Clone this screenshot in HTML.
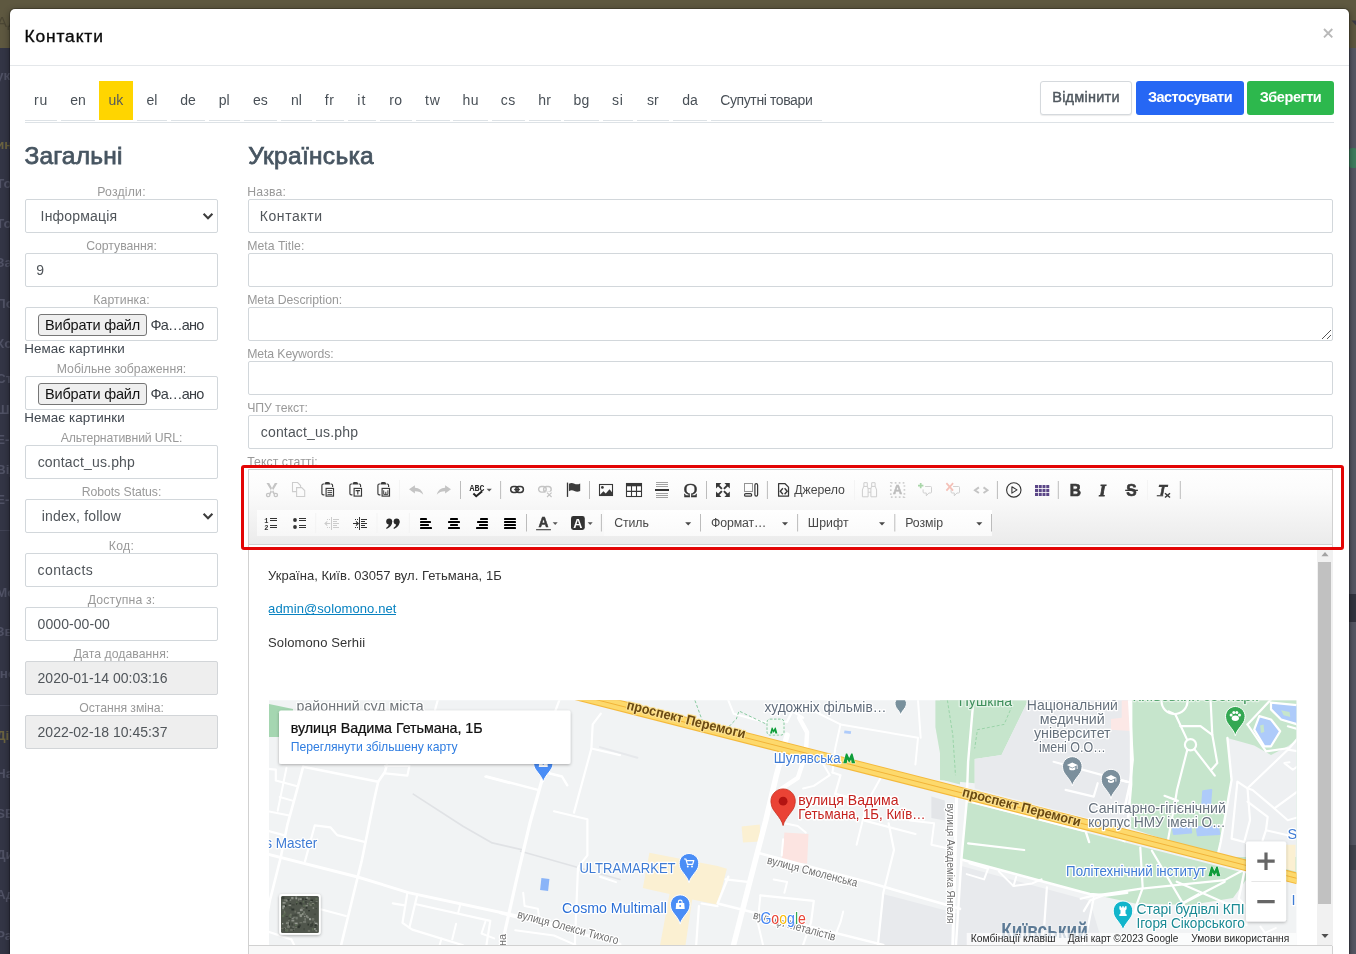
<!DOCTYPE html>
<html lang="uk"><head><meta charset="utf-8"><title>Контакти</title>
<style>
html,body{margin:0;padding:0}
body{width:1356px;height:954px;overflow:hidden;position:relative;background:#fff;font-family:"Liberation Sans",sans-serif;color:#50555a}
.wrap{position:absolute;left:0;top:0;width:1356px;height:954px;overflow:hidden;will-change:transform}
.t{position:absolute;white-space:nowrap;line-height:1;display:block}
.a{position:absolute;display:block}
.bgtop{position:absolute;left:0;top:0;width:1356px;height:48px;background:#5e5840}
.bgleft{position:absolute;left:0;top:48px;width:12px;height:906px;background:#333545}
.sf{position:absolute;left:-4px;width:16px;overflow:hidden;white-space:nowrap;font-size:13.5px;font-weight:700;line-height:16px;color:#505265}
.sfl{position:absolute;left:0;width:12px;height:1px;background:#414355}
.bgright{position:absolute;left:1346px;top:48px;width:10px;height:906px;background:linear-gradient(90deg,#454753,#565864 60%)}
.bgright2{position:absolute;left:1346px;top:594px;width:10px;height:28px;background:#32343f}
.bgright3{position:absolute;left:1346px;top:845px;width:10px;height:25px;background:#42444e}
.bggreen{position:absolute;left:1349px;top:148px;width:8px;height:20px;background:#3e7d5e;border-radius:3px}
.modal{position:absolute;left:10px;top:8.5px;width:1339px;height:960px;background:#fff;border-radius:5px;box-shadow:0 0 0 1px rgba(0,0,0,.2),0 2px 7px rgba(0,0,0,.45)}
.mhead{position:absolute;left:0;top:56.5px;width:100%;height:1px;background:#e4e7ea}
.tab{position:absolute;top:81px;height:39px;border-bottom:1px solid #dde2e6;box-sizing:content-box}
.tab.act{background:#ffd500;border-bottom:0;height:38.7px;top:81.3px}
.hr{position:absolute;height:1px;background:#dde2e6}
.btn{position:absolute;border-radius:3px;box-sizing:border-box}
.b1{background:#fff;border:1px solid #d5d9dd;box-shadow:0 1px 1px rgba(0,0,0,.08)}
.b2{background:#2667f4}
.b3{background:#2db84d}
.inp{position:absolute;height:33.5px;box-sizing:border-box;border:1px solid #d2d7db;border-radius:2px;background:#fff}
.inp.dis{background:#eeeeee;border-color:#d2d5d8}
.fbtn{position:absolute;box-sizing:border-box;border:1px solid #767676;border-radius:3px;background:#efefef}

.ckbox{position:absolute;left:248px;top:469px;width:1084.8px;height:500px;box-sizing:border-box;border:1px solid #d1d1d1;background:#fff}
.cktop{position:absolute;left:249px;top:470px;width:1082.8px;height:73.6px;background:linear-gradient(#fefefe,#fbfbfb 30%,#f3f3f3 65%,#ebebeb);border-bottom:1px solid #d1d1d1}
.ckband{position:absolute;left:256.7px;top:510.4px;width:347px;height:25.2px;background:linear-gradient(rgba(255,255,255,.75),rgba(255,255,255,.55))}
.ckband2{position:absolute;left:603.7px;top:510.4px;width:388.3px;height:25.2px;background:linear-gradient(#fff,#fafafa)}

.sbtrack{position:absolute;left:1316.5px;top:548px;width:16px;height:397.5px;background:#f1f1f1}
.sbthumb{position:absolute;left:1318.2px;top:562px;width:12.8px;height:342px;background:#c1c1c1}
.ckbottom{position:absolute;left:249px;top:945px;width:1082.8px;height:10px;background:#f8f8f8;border-top:1px solid #d1d1d1}
.redbox{position:absolute;left:241px;top:465px;width:1103px;height:84.5px;box-sizing:border-box;border:3px solid #e30505;border-radius:3px}
</style></head>
<body>
<div class="wrap">
<div class="bgtop"></div><div class="bgleft"></div><div class="bgright"></div><div class="bgright2"></div><div class="bgright3"></div><div class="bggreen"></div><svg class="a" style="left:1350px;top:19px" width="6" height="8" viewBox="0 0 6 8"><path d="M1.5 1.5 H6 V6.5 Z" fill="#3a3a44"/></svg>
<span class="sf" style="top:68px;">ук</span>
<span class="sf" style="top:137px;color:#6b6340;">ин</span>
<span class="sf" style="top:176px;">То</span>
<span class="sf" style="top:216px;">То</span>
<span class="sf" style="top:255px;">За</span>
<span class="sf" style="top:296px;">По</span>
<span class="sf" style="top:336px;">Ко</span>
<span class="sf" style="top:371px;">Ст</span>
<span class="sf" style="top:402px;">Ша</span>
<span class="sf" style="top:432px;">E-r</span>
<span class="sf" style="top:462px;">Від</span>
<span class="sf" style="top:492px;">E-r</span>
<span class="sf" style="top:585px;">Мо</span>
<span class="sf" style="top:624px;">Зв</span>
<span class="sf" style="top:666px;">Інс</span>
<span class="sf" style="top:728px;color:#6b6340;">Ді</span>
<span class="sf" style="top:766px;">На</span>
<span class="sf" style="top:806px;">SE</span>
<span class="sf" style="top:847px;">Ди</span>
<span class="sf" style="top:887px;">Ад</span>
<span class="sf" style="top:928px;">Ра</span>
<span class="sf" style="top:14px;left:-3px;color:#4b4634;font-weight:400;font-size:15px">АД</span>
<div class="sfl" style="top:530px"></div><div class="sfl" style="top:705px"></div>
<div class="modal">
<div class="mhead"></div>
</div>
<span class="t" style="left:24.47px;top:28.07px;font-size:17.4px;color:#0a0a0a;letter-spacing:0.865px;-webkit-text-stroke:0.35px #0a0a0a;">Контакти</span>
<svg class="a" style="left:1322px;top:27px" width="12" height="12" viewBox="0 0 12 12"><path d="M2 2 L10.3 10.3 M10.3 2 L2 10.3" stroke="#b9b9b9" stroke-width="1.9" fill="none"/></svg>
<div class="tab" style="left:25.0px;width:32.0px"></div>
<span class="t" style="left:25.00px;top:93.35px;font-size:14px;color:#495057;letter-spacing:0.683px;width:32.0px;text-align:center;">ru</span>
<div class="tab" style="left:61.0px;width:34.0px"></div>
<span class="t" style="left:61.00px;top:93.35px;font-size:14px;color:#495057;width:34.0px;text-align:center;">en</span>
<div class="tab act" style="left:98.5px;width:34.8px"></div>
<span class="t" style="left:98.50px;top:93.35px;font-size:14px;color:#55595c;width:34.8px;text-align:center;">uk</span>
<div class="tab" style="left:136.6px;width:30.8px"></div>
<span class="t" style="left:136.60px;top:93.35px;font-size:14px;color:#495057;width:30.8px;text-align:center;">el</span>
<div class="tab" style="left:171.0px;width:34.0px"></div>
<span class="t" style="left:171.00px;top:93.35px;font-size:14px;color:#495057;width:34.0px;text-align:center;">de</span>
<div class="tab" style="left:208.5px;width:31.5px"></div>
<span class="t" style="left:208.50px;top:93.35px;font-size:14px;color:#495057;width:31.5px;text-align:center;">pl</span>
<div class="tab" style="left:243.6px;width:33.4px"></div>
<span class="t" style="left:243.60px;top:93.35px;font-size:14px;color:#495057;width:33.4px;text-align:center;">es</span>
<div class="tab" style="left:280.7px;width:31.3px"></div>
<span class="t" style="left:280.70px;top:93.35px;font-size:14px;color:#495057;width:31.3px;text-align:center;">nl</span>
<div class="tab" style="left:315.5px;width:28.4px"></div>
<span class="t" style="left:315.50px;top:93.35px;font-size:14px;color:#495057;letter-spacing:0.629px;width:28.4px;text-align:center;">fr</span>
<div class="tab" style="left:347.6px;width:28.4px"></div>
<span class="t" style="left:347.60px;top:93.35px;font-size:14px;color:#495057;letter-spacing:1.060px;width:28.4px;text-align:center;">it</span>
<div class="tab" style="left:379.7px;width:32.3px"></div>
<span class="t" style="left:379.70px;top:93.35px;font-size:14px;color:#495057;letter-spacing:0.433px;width:32.3px;text-align:center;">ro</span>
<div class="tab" style="left:415.8px;width:34.2px"></div>
<span class="t" style="left:415.80px;top:93.35px;font-size:14px;color:#495057;letter-spacing:0.910px;width:34.2px;text-align:center;">tw</span>
<div class="tab" style="left:453.4px;width:34.6px"></div>
<span class="t" style="left:453.40px;top:93.35px;font-size:14px;color:#495057;letter-spacing:0.421px;width:34.6px;text-align:center;">hu</span>
<div class="tab" style="left:491.7px;width:33.1px"></div>
<span class="t" style="left:491.70px;top:93.35px;font-size:14px;color:#495057;letter-spacing:0.410px;width:33.1px;text-align:center;">cs</span>
<div class="tab" style="left:528.6px;width:32.0px"></div>
<span class="t" style="left:528.60px;top:93.35px;font-size:14px;color:#495057;letter-spacing:0.183px;width:32.0px;text-align:center;">hr</span>
<div class="tab" style="left:564.4px;width:34.3px"></div>
<span class="t" style="left:564.40px;top:93.35px;font-size:14px;color:#495057;letter-spacing:0.371px;width:34.3px;text-align:center;">bg</span>
<div class="tab" style="left:602.5px;width:30.8px"></div>
<span class="t" style="left:602.50px;top:93.35px;font-size:14px;color:#495057;letter-spacing:0.848px;width:30.8px;text-align:center;">si</span>
<div class="tab" style="left:636.9px;width:32.1px"></div>
<span class="t" style="left:636.90px;top:93.35px;font-size:14px;color:#495057;width:32.1px;text-align:center;">sr</span>
<div class="tab" style="left:672.7px;width:34.6px"></div>
<span class="t" style="left:672.70px;top:93.35px;font-size:14px;color:#495057;width:34.6px;text-align:center;">da</span>
<div class="tab" style="left:710.8px;width:111.0px"></div>
<span class="t" style="left:710.80px;top:93.35px;font-size:14px;color:#495057;letter-spacing:-0.389px;width:111.0px;text-align:center;">Супутні товари</span>
<div class="hr" style="left:25px;top:122px;width:1309px"></div>
<div class="btn b1" style="left:1040px;top:81px;width:92px;height:34px"></div>
<span class="t" style="left:1040.00px;top:89.73px;font-size:14.5px;color:#50585f;letter-spacing:0.231px;width:92px;text-align:center;-webkit-text-stroke:0.45px #50585f;">Відмінити</span>
<div class="btn b2" style="left:1136px;top:81px;width:108px;height:34px"></div>
<span class="t" style="left:1136.00px;top:89.73px;font-size:14.5px;font-weight:700;color:#fff;letter-spacing:-0.503px;width:108px;text-align:center;">Застосувати</span>
<div class="btn b3" style="left:1247px;top:81px;width:87px;height:34px"></div>
<span class="t" style="left:1247.00px;top:89.73px;font-size:14.5px;font-weight:700;color:#fff;letter-spacing:-0.439px;width:87px;text-align:center;">Зберегти</span>
<span class="t" style="left:24.41px;top:144.06px;font-size:24.5px;color:#475561;letter-spacing:0.213px;-webkit-text-stroke:0.75px #475561;">Загальні</span>
<span class="t" style="left:248.21px;top:144.06px;font-size:24.5px;color:#475561;letter-spacing:0.311px;-webkit-text-stroke:0.75px #475561;">Українська</span>
<span class="t" style="left:25.00px;top:186.43px;font-size:12.25px;color:#999;letter-spacing:0.196px;width:193px;text-align:center;">Розділи:</span>
<div class="inp " style="left:25px;top:199.2px;width:193px"></div>
<span class="t" style="left:40.59px;top:209.25px;font-size:14px;letter-spacing:0.188px;">Інформація</span>
<svg class="a" style="left:202px;top:212.0px" width="12" height="9" viewBox="0 0 12 9"><path d="M1.6 1.8 L6 6.2 L10.4 1.8" stroke="#3c3c3c" stroke-width="2.1" fill="none"/></svg>
<span class="t" style="left:25.00px;top:240.23px;font-size:12.25px;color:#999;letter-spacing:-0.021px;width:193px;text-align:center;">Сортування:</span>
<div class="inp " style="left:25px;top:253.2px;width:193px"></div>
<span class="t" style="left:36.29px;top:263.25px;font-size:14px;">9</span>
<span class="t" style="left:25.00px;top:294.23px;font-size:12.25px;color:#999;letter-spacing:0.114px;width:193px;text-align:center;">Картинка:</span>
<div class="inp " style="left:25px;top:307.2px;width:193px"></div>
<div class="fbtn" style="left:38px;top:313.8px;width:109px;height:22px"></div>
<span class="t" style="left:38.00px;top:318.33px;font-size:14.5px;color:#111;letter-spacing:-0.194px;width:109px;text-align:center;">Вибрати файл</span>
<span class="t" style="left:150.56px;top:318.33px;font-size:14.5px;color:#3a3f45;letter-spacing:-0.808px;">Фа…ано</span>
<span class="t" style="left:24.13px;top:342.16px;font-size:13.4px;color:#40474f;letter-spacing:0.093px;">Немає картинки</span>
<span class="t" style="left:25.00px;top:363.23px;font-size:12.25px;color:#999;letter-spacing:0.034px;width:193px;text-align:center;">Мобільне зображення:</span>
<div class="inp " style="left:25px;top:376.2px;width:193px"></div>
<div class="fbtn" style="left:38px;top:382.8px;width:109px;height:22px"></div>
<span class="t" style="left:38.00px;top:387.33px;font-size:14.5px;color:#111;letter-spacing:-0.194px;width:109px;text-align:center;">Вибрати файл</span>
<span class="t" style="left:150.56px;top:387.33px;font-size:14.5px;color:#3a3f45;letter-spacing:-0.808px;">Фа…ано</span>
<span class="t" style="left:24.13px;top:411.16px;font-size:13.4px;color:#40474f;letter-spacing:0.093px;">Немає картинки</span>
<span class="t" style="left:25.00px;top:432.23px;font-size:12.25px;color:#999;letter-spacing:-0.121px;width:193px;text-align:center;">Альтернативний URL:</span>
<div class="inp " style="left:25px;top:445.2px;width:193px"></div>
<span class="t" style="left:37.69px;top:455.25px;font-size:14px;letter-spacing:0.168px;">contact_us.php</span>
<span class="t" style="left:25.00px;top:486.23px;font-size:12.25px;color:#999;letter-spacing:-0.055px;width:193px;text-align:center;">Robots Status:</span>
<div class="inp " style="left:25px;top:499.2px;width:193px"></div>
<span class="t" style="left:41.69px;top:509.25px;font-size:14px;letter-spacing:0.175px;">index, follow</span>
<svg class="a" style="left:202px;top:512.0px" width="12" height="9" viewBox="0 0 12 9"><path d="M1.6 1.8 L6 6.2 L10.4 1.8" stroke="#3c3c3c" stroke-width="2.1" fill="none"/></svg>
<span class="t" style="left:25.00px;top:540.23px;font-size:12.25px;color:#999;letter-spacing:0.340px;width:193px;text-align:center;">Код:</span>
<div class="inp " style="left:25px;top:553.2px;width:193px"></div>
<span class="t" style="left:37.49px;top:563.25px;font-size:14px;letter-spacing:0.460px;">contacts</span>
<span class="t" style="left:25.00px;top:594.23px;font-size:12.25px;color:#999;letter-spacing:0.155px;width:193px;text-align:center;">Доступна з:</span>
<div class="inp " style="left:25px;top:607.2px;width:193px"></div>
<span class="t" style="left:37.59px;top:617.25px;font-size:14px;letter-spacing:0.069px;">0000-00-00</span>
<span class="t" style="left:25.00px;top:648.23px;font-size:12.25px;color:#999;letter-spacing:0.044px;width:193px;text-align:center;">Дата додавання:</span>
<div class="inp dis" style="left:25px;top:661.2px;width:193px"></div>
<span class="t" style="left:37.59px;top:671.25px;font-size:14px;letter-spacing:-0.009px;">2020-01-14 00:03:16</span>
<span class="t" style="left:25.00px;top:702.23px;font-size:12.25px;color:#999;letter-spacing:-0.047px;width:193px;text-align:center;">Остання зміна:</span>
<div class="inp dis" style="left:25px;top:715.2px;width:193px"></div>
<span class="t" style="left:37.59px;top:725.25px;font-size:14px;letter-spacing:-0.009px;">2022-02-18 10:45:37</span>
<span class="t" style="left:247.20px;top:186.43px;font-size:12.25px;color:#999;letter-spacing:0.210px;">Назва:</span>
<div class="inp" style="left:248px;top:199.2px;width:1085px;height:33.5px"></div>
<span class="t" style="left:259.79px;top:209.25px;font-size:14px;letter-spacing:0.573px;">Контакти</span>
<span class="t" style="left:247.20px;top:240.23px;font-size:12.25px;color:#999;letter-spacing:0.062px;">Meta Title:</span>
<div class="inp" style="left:248px;top:253.2px;width:1085px;height:33.5px"></div>
<span class="t" style="left:247.20px;top:294.23px;font-size:12.25px;color:#999;letter-spacing:-0.020px;">Meta Description:</span>
<div class="inp" style="left:248px;top:307.2px;width:1085px;height:33.5px"></div>
<svg class="a" style="left:1321px;top:329px" width="11" height="11" viewBox="0 0 11 11"><path d="M10 1 L1 10 M10 6 L6 10" stroke="#555" stroke-width="1" fill="none"/></svg>
<span class="t" style="left:247.20px;top:348.23px;font-size:12.25px;color:#999;letter-spacing:-0.103px;">Meta Keywords:</span>
<div class="inp" style="left:248px;top:361.2px;width:1085px;height:33.5px"></div>
<span class="t" style="left:247.20px;top:402.23px;font-size:12.25px;color:#999;letter-spacing:-0.029px;">ЧПУ текст:</span>
<div class="inp" style="left:248px;top:415.2px;width:1085px;height:33.5px"></div>
<span class="t" style="left:260.79px;top:425.25px;font-size:14px;letter-spacing:0.168px;">contact_us.php</span>
<span class="t" style="left:247.20px;top:456.23px;font-size:12.25px;color:#999;letter-spacing:0.066px;">Текст статті:</span>
<div class="ckbox"></div><div class="cktop"></div><div class="ckband"></div><div class="ckband2"></div>
<svg class="a" style="left:0;top:0" width="1356" height="954" viewBox="0 0 1356 954"><g transform="translate(264.0 482.0)"><path d="M2.5 0.9 L5.2 0.9 L9.2 8.2 L10.9 11.4 L9.6 12.2 L7.2 8.8 Z M13.5 0.9 L10.8 0.9 L6.8 8.2 L5.1 11.4 L6.4 12.2 L8.8 8.8 Z" fill="#c4c4c4"/><circle cx="4.2" cy="13" r="1.7" fill="none" stroke="#c4c4c4" stroke-width="1.3"/><circle cx="11.8" cy="13" r="1.7" fill="none" stroke="#c4c4c4" stroke-width="1.3"/></g>
<g transform="translate(292.0 482.0)"><path d="M4.6 9.6 H0.5 V0.5 H5.6 L8.6 3.5 V5.6" fill="none" stroke="#cdcdcd" stroke-width="1.1"/><path d="M4.6 5.6 H9.7 L12.7 8.6 V14.5 H4.6 Z" fill="none" stroke="#cdcdcd" stroke-width="1.1"/></g>
<g transform="translate(320.0 482.0)"><path d="M4.6 2.6 V1.7 Q4.6 0 6.3 0 H8.4 Q10.1 0 10.1 1.7 V2.6 Z" fill="#383838"/><path d="M4.2 2 H3.3 Q1.9 2 1.9 3.4 V11.4 Q1.9 12.8 3.3 12.8 H4.4 M10.6 2 H11.2 Q12.6 2 12.6 3.4 V4.9" fill="none" stroke="#383838" stroke-width="1.15"/><rect x="6.1" y="6.4" width="7.4" height="7.7" fill="none" stroke="#383838" stroke-width="1.15"/><path d="M7.5 8.6 H12.1 M7.5 10.5 H12.1 M7.5 12.4 H12.1" stroke="#383838" stroke-width="0.9"/></g>
<g transform="translate(348.0 482.0)"><path d="M4.6 2.6 V1.7 Q4.6 0 6.3 0 H8.4 Q10.1 0 10.1 1.7 V2.6 Z" fill="#383838"/><path d="M4.2 2 H3.3 Q1.9 2 1.9 3.4 V11.4 Q1.9 12.8 3.3 12.8 H4.4 M10.6 2 H11.2 Q12.6 2 12.6 3.4 V4.9" fill="none" stroke="#383838" stroke-width="1.15"/><rect x="6.1" y="6.4" width="7.4" height="7.7" fill="none" stroke="#383838" stroke-width="1.15"/><path d="M7.6 8.6 H12 M9.8 8.6 V12.6" stroke="#383838" stroke-width="1.1" fill="none"/></g>
<g transform="translate(376.0 482.0)"><path d="M4.6 2.6 V1.7 Q4.6 0 6.3 0 H8.4 Q10.1 0 10.1 1.7 V2.6 Z" fill="#383838"/><path d="M4.2 2 H3.3 Q1.9 2 1.9 3.4 V11.4 Q1.9 12.8 3.3 12.8 H4.4 M10.6 2 H11.2 Q12.6 2 12.6 3.4 V4.9" fill="none" stroke="#383838" stroke-width="1.15"/><rect x="6.1" y="6.4" width="7.4" height="7.7" fill="none" stroke="#383838" stroke-width="1.15"/><path d="M7.7 8.3 V12.4 H11.9 V8.3 M9.8 9.8 V12.4" stroke="#383838" stroke-width="0.95" fill="none"/></g>
<g transform="translate(408.0 482.0)"><path d="M1 7.3 L6.9 3.3 V5.8 Q13.3 6 15.3 12.7 Q12 9.2 6.9 9.3 V11.4 Z" fill="#c4c4c4"/></g>
<g transform="translate(436.0 482.0)"><path d="M15 7.3 L9.1 3.3 V5.8 Q2.7 6 0.7 12.7 Q4 9.2 9.1 9.3 V11.4 Z" fill="#c4c4c4"/></g>
<g transform="translate(469.0 482.0)"><text x="0.4" y="8.7" font-family="Liberation Mono, monospace" font-size="9.3" font-weight="700" textLength="15" lengthAdjust="spacingAndGlyphs" fill="#2b2b2b">ABC</text><path d="M4.4 11.6 L7.2 14.2 L13.2 9.2" fill="none" stroke="#222" stroke-width="2"/></g>
<path d="M486.6 488.8 h5.2 l-2.6 2.8 z" fill="#555"/>
<g transform="translate(509.0 482.0)"><rect x="1.7" y="4.6" width="7.6" height="5.8" rx="2.9" fill="none" stroke="#383838" stroke-width="1.5"/><rect x="6.8" y="4.6" width="7.6" height="5.8" rx="2.9" fill="none" stroke="#383838" stroke-width="1.5"/><path d="M5.2 7.5 H10.9" stroke="#383838" stroke-width="1.3"/></g>
<g transform="translate(537.0 482.0)"><rect x="1.6" y="4.5" width="7.6" height="5.6" rx="2.8" fill="none" stroke="#c4c4c4" stroke-width="1.4"/><rect x="6.6" y="4.5" width="7.6" height="5.6" rx="2.8" fill="none" stroke="#c4c4c4" stroke-width="1.4"/><rect x="8.6" y="9.6" width="7" height="6" fill="#fbfbfb"/><path d="M10 10.6 L14.6 15 M14.6 10.6 L10 15" stroke="#c4c4c4" stroke-width="1.2"/></g>
<g transform="translate(565.0 482.0)"><path d="M2.5 0.6 V14.9" stroke="#383838" stroke-width="1.3"/><path d="M3.9 1.7 Q6.6 0.3 9.4 1.7 T15.2 1.4 V9 Q12.2 10.4 9.4 9 T3.9 9.2 Z" fill="#3d3d3d"/></g>
<g transform="translate(598.0 482.0)"><rect x="1.5" y="2.5" width="13" height="11" fill="none" stroke="#383838" stroke-width="1.1"/><circle cx="4.4" cy="5.4" r="1.4" fill="#383838"/><path d="M2 13 V12.7 L5.4 9.3 L7.8 11.6 L11.5 7.2 L14 10.2 V13 Z" fill="#383838"/></g>
<g transform="translate(626.0 482.0)"><rect x="0.5" y="1.5" width="15" height="13" fill="#fff" stroke="#383838" stroke-width="1.1"/><rect x="0" y="1" width="16" height="3.3" fill="#383838"/><path d="M5.5 4 V14.5 M10.5 4 V14.5 M0.5 9.4 H15.5" stroke="#383838" stroke-width="1.1"/></g>
<g transform="translate(654.0 482.0)"><path d="M2 0.5 H14 M2 2.5 H14 M2 4.5 H14 M2 11.5 H14 M2 13.5 H14 M2 15.5 H14" stroke="#8a8a8a" stroke-width="0.8"/><rect x="1" y="7" width="14" height="2" fill="#333"/></g>
<text x="690.5" y="496.9" text-anchor="middle" font-family="Liberation Serif, serif" font-size="19.5" font-weight="400" fill="#333" stroke="#333" stroke-width="0.35">Ω</text>
<g transform="translate(715.0 482.0)"><path d="M1 1 H6.4 L1 6.4 Z" fill="#383838"/><path d="M3 3 L6.9 6.9" stroke="#383838" stroke-width="1.9"/><g transform="translate(15.8 0) scale(-1 1)"><path d="M1 1 H6.4 L1 6.4 Z" fill="#383838"/><path d="M3 3 L6.9 6.9" stroke="#383838" stroke-width="1.9"/></g><g transform="translate(0 16) scale(1 -1)"><path d="M1 1 H6.4 L1 6.4 Z" fill="#383838"/><path d="M3 3 L6.9 6.9" stroke="#383838" stroke-width="1.9"/></g><g transform="translate(15.8 16) scale(-1 -1)"><path d="M1 1 H6.4 L1 6.4 Z" fill="#383838"/><path d="M3 3 L6.9 6.9" stroke="#383838" stroke-width="1.9"/></g></g>
<g transform="translate(743.0 482.0)"><rect x="1.5" y="1.5" width="8" height="8" fill="none" stroke="#2b2b2b" stroke-width="1" stroke-dasharray="1 1"/><rect x="11.9" y="1.7" width="2.7" height="12.4" rx="1.35" fill="none" stroke="#383838" stroke-width="1.2"/><rect x="1.5" y="11.6" width="7.2" height="2.6" rx="1.3" fill="none" stroke="#383838" stroke-width="1.2"/></g>
<g transform="translate(775.5 482.0)"><path d="M3.1 1.7 H9.6 L13 5.1 V14.2 H3.1 Z" fill="none" stroke="#383838" stroke-width="1.25" stroke-linejoin="round"/><path d="M7.4 6.3 L4.8 9.3 L7.4 12.3 M9.1 6.3 L11.7 9.3 L9.1 12.3" fill="none" stroke="#383838" stroke-width="1.4"/></g>
<g transform="translate(861.5 482.0)"><path d="M2.4 4.4 V0.7 H5.8 V4.4 M10.2 4.4 V0.7 H13.6 V4.4 M2.2 4.4 H6 L6.6 7 V14.8 H0.9 V8 Z M10 4.4 H13.8 L15.1 8 V14.8 H9.4 V7 Z M6.6 6.6 H9.4 M6.6 10.2 H9.4" fill="none" stroke="#cdcdcd" stroke-width="1"/></g>
<g transform="translate(889.5 482.0)"><rect x="1.3" y="0.9" width="13.6" height="14.2" fill="none" stroke="#cfcfcf" stroke-width="1.7" stroke-dasharray="1.7 2.26"/><text x="8.1" y="12.4" text-anchor="middle" font-family="Liberation Sans, sans-serif" font-weight="700" font-size="12.6" fill="#bdbdbd" stroke="#bdbdbd" stroke-width="0.5">A</text></g>
<g transform="translate(917.5 482.0)"><path d="M7.6 4.5 H13 Q14 4.5 14 5.5 V10 Q14 11 13 11 H11.4 L8.8 13.8 V11 H6.6 Q5.6 11 5.6 10 V7.4" fill="none" stroke="#cecece" stroke-width="0.95"/><path d="M3.2 0.9 V6.3 M0.5 3.6 H5.9" stroke="#a9d6a9" stroke-width="1.7"/></g>
<g transform="translate(945.5 482.0)"><path d="M7.6 4.5 H13 Q14 4.5 14 5.5 V10 Q14 11 13 11 H11.4 L8.8 13.8 V11 H6.6 Q5.6 11 5.6 10 V7.4" fill="none" stroke="#cecece" stroke-width="0.95"/><path d="M0.9 1.1 L7.6 8.6 M7.6 1.1 L0.9 8.6" stroke="#f4c0b7" stroke-width="1.7"/></g>
<g transform="translate(973.2 482.0)"><path d="M5.7 5.4 L1.7 8.2 L5.7 11 M10.3 5.4 L14.3 8.2 L10.3 11" fill="none" stroke="#c4c4c4" stroke-width="1.9"/></g>
<g transform="translate(1005.8 482.0)"><circle cx="8" cy="7.9" r="7.2" fill="none" stroke="#333" stroke-width="1.1"/><path d="M6.1 4.7 L11.2 7.9 L6.1 11.1 Z" fill="none" stroke="#333" stroke-width="1.1" stroke-linejoin="round"/></g>
<g transform="translate(1034.0 482.0)"><rect x="1.00" y="3.00" width="3" height="3.1" fill="#5b4687"/><rect x="1.00" y="6.95" width="3" height="3.1" fill="#5b4687"/><rect x="1.00" y="10.90" width="3" height="3.1" fill="#5b4687"/><rect x="4.75" y="3.00" width="3" height="3.1" fill="#5b4687"/><rect x="4.75" y="6.95" width="3" height="3.1" fill="#5b4687"/><rect x="4.75" y="10.90" width="3" height="3.1" fill="#5b4687"/><rect x="8.50" y="3.00" width="3" height="3.1" fill="#5b4687"/><rect x="8.50" y="6.95" width="3" height="3.1" fill="#5b4687"/><rect x="8.50" y="10.90" width="3" height="3.1" fill="#5b4687"/><rect x="12.25" y="3.00" width="3" height="3.1" fill="#5b4687"/><rect x="12.25" y="6.95" width="3" height="3.1" fill="#5b4687"/><rect x="12.25" y="10.90" width="3" height="3.1" fill="#5b4687"/></g>
<text x="1075.4" y="496" text-anchor="middle" font-family="Liberation Sans, sans-serif" font-weight="700" font-size="15.6" fill="#3a3a3a" stroke="#3a3a3a" stroke-width="0.7">B</text>
<text x="1102.4" y="496" text-anchor="middle" font-family="Liberation Serif, serif" font-weight="700" font-style="italic" font-size="16.6" fill="#3a3a3a" stroke="#3a3a3a" stroke-width="0.8">I</text>
<text x="1131.4" y="496" text-anchor="middle" font-family="Liberation Sans, sans-serif" font-weight="700" font-size="15.6" fill="#3a3a3a" stroke="#3a3a3a" stroke-width="0.6">S</text><rect x="1125.2" y="489.7" width="12.7" height="1.3" fill="#3a3a3a"/>
<text x="1162.4" y="494.6" text-anchor="middle" font-family="Liberation Sans, sans-serif" font-weight="700" font-style="italic" font-size="14.6" fill="#3a3a3a" stroke="#3a3a3a" stroke-width="0.6">T</text><rect x="1156.8" y="495.2" width="6.4" height="1.1" fill="#3a3a3a"/><path d="M1165 493.2 L1170 497.5 M1170 493.2 L1165 497.5" stroke="#3a3a3a" stroke-width="1.5"/>
<g transform="translate(263.0 516.0)"><text x="1.3" y="7" font-family="Liberation Mono, monospace" font-weight="700" font-size="7" fill="#333">1</text><text x="1.3" y="14" font-family="Liberation Mono, monospace" font-weight="700" font-size="7" fill="#333">2</text><path d="M7 2.5 H14 M7 4.5 H14 M7 9.5 H14 M7 11.5 H14" stroke="#333" stroke-width="1"/></g>
<g transform="translate(291.5 516.0)"><circle cx="3.5" cy="4" r="1.9" fill="#333"/><circle cx="3.5" cy="11" r="1.9" fill="#333"/><path d="M7.5 2.5 H14.5 M7.5 4.5 H14.5 M7.5 9.5 H14.5 M7.5 11.5 H14.5" stroke="#333" stroke-width="1"/></g>
<g transform="translate(324.0 516.0)"><path d="M7.5 1 V14" stroke="#cccccc" stroke-width="1"/><path d="M9 3.5 H15 M9 5.5 H13 M9 7.5 H15 M9 9.5 H13 M9 11.5 H15" stroke="#cccccc" stroke-width="1"/><path d="M1.3 7.5 H6.3 M3.3 5.4 L1 7.5 L3.3 9.6" fill="none" stroke="#cccccc" stroke-width="1.1"/><path d="M3 3.5 H4 M5 3.5 H6 M3 11.5 H4 M5 11.5 H6" stroke="#cccccc" stroke-width="1"/></g>
<g transform="translate(352.0 516.0)"><path d="M7.5 1 V14" stroke="#333" stroke-width="1"/><path d="M9 3.5 H15 M9 5.5 H13 M9 7.5 H15 M9 9.5 H13 M9 11.5 H15" stroke="#333" stroke-width="1"/><path d="M1 7.5 H6 M4 5.4 L6.3 7.5 L4 9.6" fill="none" stroke="#333" stroke-width="1.1"/><path d="M3 3.5 H4 M5 3.5 H6 M3 11.5 H4 M5 11.5 H6" stroke="#333" stroke-width="1"/></g>
<g transform="translate(385.0 516.0)"><circle cx="4.2" cy="5.5" r="3" fill="#2a2a2a"/><path d="M7.2 5.3 Q7.3 10.6 1.6 13 L1.1 12.1 Q4 10.3 3.9 7.6 Z" fill="#2a2a2a"/><g transform="translate(7.4 0)"><circle cx="4.2" cy="5.5" r="3" fill="#2a2a2a"/><path d="M7.2 5.3 Q7.3 10.6 1.6 13 L1.1 12.1 Q4 10.3 3.9 7.6 Z" fill="#2a2a2a"/></g></g>
<g transform="translate(418.0 516.0)"><rect x="2.0" y="2.00" width="7.0" height="2" rx="0.4" fill="#000"/><rect x="2.0" y="5.00" width="11.0" height="2" rx="0.4" fill="#000"/><rect x="2.0" y="8.00" width="9.0" height="2" rx="0.4" fill="#000"/><rect x="2.0" y="11.00" width="12.0" height="2" rx="0.4" fill="#000"/></g>
<g transform="translate(446.0 516.0)"><rect x="4.0" y="2.00" width="8.0" height="2" rx="0.4" fill="#000"/><rect x="2.0" y="5.00" width="12.0" height="2" rx="0.4" fill="#000"/><rect x="4.0" y="8.00" width="8.0" height="2" rx="0.4" fill="#000"/><rect x="2.0" y="11.00" width="12.0" height="2" rx="0.4" fill="#000"/></g>
<g transform="translate(474.0 516.0)"><rect x="6.0" y="2.00" width="8.0" height="2" rx="0.4" fill="#000"/><rect x="3.0" y="5.00" width="11.0" height="2" rx="0.4" fill="#000"/><rect x="5.0" y="8.00" width="9.0" height="2" rx="0.4" fill="#000"/><rect x="2.0" y="11.00" width="12.0" height="2" rx="0.4" fill="#000"/></g>
<g transform="translate(502.0 516.0)"><rect x="2.0" y="2.00" width="12.0" height="2" rx="0.4" fill="#000"/><rect x="2.0" y="5.00" width="12.0" height="2" rx="0.4" fill="#000"/><rect x="2.0" y="8.00" width="12.0" height="2" rx="0.4" fill="#000"/><rect x="2.0" y="11.00" width="12.0" height="2" rx="0.4" fill="#000"/></g>
<text x="543.4" y="526.6" text-anchor="middle" font-family="Liberation Sans, sans-serif" font-weight="700" font-size="13.8" fill="#3a3a3a" stroke="#3a3a3a" stroke-width="0.5">A</text><rect x="536.1" y="529" width="14.8" height="1.3" fill="#5a5a5a"/>
<path d="M552.7 522.2 h5 l-2.5 2.8 z" fill="#555"/>
<rect x="571" y="516" width="13.8" height="13.9" rx="2.4" fill="#333"/><text x="577.9" y="527.6" text-anchor="middle" font-family="Liberation Sans, sans-serif" font-weight="700" font-size="12.6" fill="#fff">A</text>
<path d="M587.7 522.2 h5 l-2.5 2.8 z" fill="#555"/>
<path d="M685.2 522.3 h6 l-3 3.1 z" fill="#484848"/>
<path d="M782.0 522.3 h6 l-3 3.1 z" fill="#484848"/>
<path d="M879.0 522.3 h6 l-3 3.1 z" fill="#484848"/>
<path d="M976.3 522.3 h6 l-3 3.1 z" fill="#484848"/>
<rect x="460.0" y="481" width="1" height="18" fill="#bcbcbc"/>
<rect x="500.1" y="481" width="1" height="18" fill="#bcbcbc"/>
<rect x="589.0" y="481" width="1" height="18" fill="#bcbcbc"/>
<rect x="706.0" y="481" width="1" height="18" fill="#bcbcbc"/>
<rect x="766.9" y="481" width="1" height="18" fill="#bcbcbc"/>
<rect x="996.9" y="481" width="1" height="18" fill="#bcbcbc"/>
<rect x="1057.8" y="481" width="1" height="18" fill="#bcbcbc"/>
<rect x="1179.8" y="481" width="1" height="18" fill="#bcbcbc"/>
<rect x="526.0" y="514" width="1" height="17.5" fill="#bcbcbc"/>
<rect x="600.9" y="514" width="1" height="17.5" fill="#bcbcbc"/>
<rect x="700.0" y="514" width="1" height="17.5" fill="#bcbcbc"/>
<rect x="797.1" y="514" width="1" height="17.5" fill="#bcbcbc"/>
<rect x="894.3" y="514" width="1" height="17.5" fill="#bcbcbc"/>
<rect x="991.0" y="514" width="1" height="17.5" fill="#bcbcbc"/>
<rect x="399.0" y="480" width="1" height="20" fill="#f4f4f4"/>
<rect x="854.0" y="480" width="1" height="20" fill="#f4f4f4"/>
<rect x="1147.0" y="480" width="1" height="20" fill="#f4f4f4"/>
<rect x="315.2" y="513" width="1" height="20" fill="#f3f3f3"/>
<rect x="376.5" y="513" width="1" height="20" fill="#f3f3f3"/>
<rect x="408.9" y="513" width="1" height="20" fill="#f3f3f3"/></svg>
<span class="t" style="left:794.30px;top:484.39px;font-size:12.3px;color:#484848;letter-spacing:-0.047px;">Джерело</span>
<span class="t" style="left:614.20px;top:516.99px;font-size:12.3px;color:#484848;letter-spacing:-0.074px;">Стиль</span>
<span class="t" style="left:711.00px;top:516.99px;font-size:12.3px;color:#484848;letter-spacing:-0.126px;">Формат…</span>
<span class="t" style="left:807.80px;top:516.99px;font-size:12.3px;color:#484848;letter-spacing:0.086px;">Шрифт</span>
<span class="t" style="left:905.20px;top:516.99px;font-size:12.3px;color:#484848;letter-spacing:-0.039px;">Розмір</span>
<div class="sbtrack"></div><div class="sbthumb"></div>
<svg class="a" style="left:1316.5px;top:549px" width="16" height="397" viewBox="0 0 16 397"><path d="M4.4 7.2 L8 3 L11.6 7.2 Z" fill="#a3a3a3"/><path d="M4.4 385 L8 389 L11.6 385 Z" fill="#505050"/></svg>
<span class="t" style="left:268.05px;top:568.50px;font-size:13px;color:#333;letter-spacing:0.036px;">Україна, Київ. 03057 вул. Гетьмана, 1Б</span>
<span class="t" style="left:268.05px;top:601.60px;font-size:13px;color:#0782c1;letter-spacing:0.102px;">admin@solomono.net</span>
<div class="a" style="left:269px;top:614px;width:127px;height:1px;background:#0782c1"></div>
<span class="t" style="left:268.05px;top:635.90px;font-size:13px;color:#333;letter-spacing:0.113px;">Solomono Serhii</span>
<svg class="a" style="left:0;top:0" width="1356" height="954" viewBox="0 0 1356 954" font-family="Liberation Sans, sans-serif"><defs><clipPath id="mc"><rect x="268.9" y="700.3" width="1027.5" height="244.7"/></clipPath><filter id="sh" x="-10%" y="-10%" width="120%" height="130%"><feDropShadow dx="0" dy="1" stdDeviation="1.6" flood-color="#000" flood-opacity="0.3"/></filter></defs><g clip-path="url(#mc)"><rect x="269" y="700" width="1028" height="246" fill="#f1f3f4"/>
<polygon points="940.0,700.3 1028.2,700.3 1001.5,755.1 974.7,759.1 974.7,783.2 940.0,780.0" fill="#c6e5cc"/>
<polygon points="935.4,700.3 960.0,700.3 960.0,784.5 944.8,780.5 935.4,727.1" fill="#c6e5cc"/>
<polygon points="1131.1,700.3 1298.1,700.3 1298.1,882.1 1131.1,828.6" fill="#c6e5cc"/>
<polygon points="1227.4,737.9 1254.2,745.5 1271.0,755.1 1287.8,746.3 1299.5,737.9 1299.5,857.1 1218.2,857.1 1220.7,842.0 1231.6,779.9" fill="#eef0f2"/>
<polygon points="966.7,801.9 1247,873.5 1246,880 1233,898 1190,905 1135,903.5 1105,897 1089.7,894.1 961.4,859.4" fill="#c6e5cc"/>
<polygon points="966.7,899.5 976.1,899.5 976.1,922.2 966.7,922.2" fill="#a8d5b2"/>
<polygon points="269,704 293,709 293,737 269,737" fill="#a5d6b1"/>
<polygon points="1028.2,700.3 1131.1,700.3 1131.1,784.5 1127.1,828.6 974.7,788.5 974.7,759.1 1001.5,755.1" fill="#e8eaed"/>
<polygon points="1121.7,700.3 1131.1,700.3 1131.1,731.1 1111.0,729.7 1111.0,719.1 1121.7,717.7" fill="#fce8e6"/>
<polygon points="961.4,866.0 1089.7,900.8 1103.0,944.9 956.0,944.9" fill="#e8eaed"/>
<polygon points="883.3,894.1 960.0,914.2 960.0,944.9 877.9,944.9" fill="#e8eaed"/>
<polygon points="931.4,796.6 944.8,800.6 944.8,820.6 931.4,817.9" fill="#e3e5e8"/>
<polygon points="649.4,852.7 717.6,866.0 726.9,868.7 717.6,904.8 692.2,899.5 685.5,944.9 660.1,944.9 669.5,894.1 642.8,888.0" fill="#fbf0d2"/>
<polygon points="741.6,826.5 759.8,824.6 760.4,841.5 743.0,842.5" fill="#fbf0d2"/>
<polygon points="784.4,832.6 808.5,834.0 807.1,863.4 781.7,862.0" fill="#fce4e1"/>
<polygon points="1284.8,844.7 1295.5,844.7 1295.5,871.4 1284.8,868.7" fill="#fbf0d2"/>
<polygon points="1203.2,791.2 1211.3,789.9 1209.9,807.2 1201.9,808.6" fill="#aecbfa" stroke="#aecbfa" stroke-width="2" stroke-linejoin="round"/>
<polygon points="1172.5,826.0 1189.9,823.3 1191.2,832.6 1173.9,834.0" fill="#aecbfa" stroke="#aecbfa" stroke-width="2" stroke-linejoin="round"/>
<polygon points="1196.6,827.3 1217.9,826.0 1219.3,834.0 1197.9,835.3" fill="#aecbfa" stroke="#aecbfa" stroke-width="2" stroke-linejoin="round"/>
<polygon points="541.4,878.1 549.4,878.9 548.1,890.9 540.1,890.1" fill="#8ab4f8"/>
<polygon points="844.5,730.5 851.2,731.3 850.7,734.0 844.0,733.2" fill="#aecbfa"/>
<path d="M266.1 853.8 L357.7 877.0 L408.4 892.6 L508.0 914.0 L560.5 925.7" fill="none" stroke="#ffffff" stroke-width="2.9" stroke-linejoin="round" stroke-linecap="round"/>
<path d="M500.5 912.8 L620.0 944.1" fill="none" stroke="#ffffff" stroke-width="2.9" stroke-linejoin="round" stroke-linecap="round"/>
<path d="M386.9 764.9 L385.0 771.7 L378.2 781.8 L374.3 799.0 L361.6 861.4 L357.7 877.0 L341.1 945.2" fill="none" stroke="#ffffff" stroke-width="2.6" stroke-linejoin="round" stroke-linecap="round"/>
<path d="M303.1 766.8 L297.2 789.2 L287.5 824.3 L280.7 857.5 L269.9 900.4 L267.0 916.0" fill="none" stroke="#ffffff" stroke-width="2.6" stroke-linejoin="round" stroke-linecap="round"/>
<path d="M303.1 766.8 L378.2 781.8" fill="none" stroke="#ffffff" stroke-width="2.4" stroke-linejoin="round" stroke-linecap="round"/>
<path d="M385.0 765.8 L409.4 765.8 L407.4 775.6 L385.0 773.3" fill="none" stroke="#ffffff" stroke-width="2.2" stroke-linejoin="round" stroke-linecap="round"/>
<path d="M267.0 768.8 L275.8 769.7 L275.8 780.5 L297.2 786.3" fill="none" stroke="#ffffff" stroke-width="2.2" stroke-linejoin="round" stroke-linecap="round"/>
<path d="M286.5 767.8 L277.7 810.7" fill="none" stroke="#ffffff" stroke-width="2.0" stroke-linejoin="round" stroke-linecap="round"/>
<path d="M279.7 797.0 L293.3 800.9" fill="none" stroke="#ffffff" stroke-width="2.0" stroke-linejoin="round" stroke-linecap="round"/>
<path d="M267.0 811.1 L289.4 815.6" fill="none" stroke="#ffffff" stroke-width="2.0" stroke-linejoin="round" stroke-linecap="round"/>
<path d="M267.0 830.6 L283.6 835.1" fill="none" stroke="#ffffff" stroke-width="2.2" stroke-linejoin="round" stroke-linecap="round"/>
<path d="M305.0 861.4 L314.8 825.3 L330.4 827.3 L337.2 835.1 L364.5 841.9" fill="none" stroke="#ffffff" stroke-width="2.2" stroke-linejoin="round" stroke-linecap="round"/>
<path d="M413.3 794.1 L463.0 826.3 L492.2 842.9 L521.5 849.7" fill="none" stroke="#e0e2e5" stroke-width="1.7" stroke-linejoin="round" stroke-linecap="round"/>
<path d="M520.6 851.3 L578.0 867.4 L620.0 879.4" fill="none" stroke="#e0e2e5" stroke-width="1.6" stroke-linejoin="round" stroke-linecap="round"/>
<path d="M485.4 776.6 L509.8 783.0" fill="none" stroke="#ffffff" stroke-width="2.4" stroke-linejoin="round" stroke-linecap="round"/>
<path d="M407.4 892.6 L402.5 922.8 L412.3 929.6 L463.0 945.2" fill="none" stroke="#ffffff" stroke-width="2.2" stroke-linejoin="round" stroke-linecap="round"/>
<path d="M417.2 894.9 L409.4 927.7" fill="none" stroke="#ffffff" stroke-width="2.2" stroke-linejoin="round" stroke-linecap="round"/>
<path d="M392.8 903.3 L404.5 905.3" fill="none" stroke="#ffffff" stroke-width="2.2" stroke-linejoin="round" stroke-linecap="round"/>
<path d="M416.2 904.3 L490.3 920.9 L486.4 945.2" fill="none" stroke="#ffffff" stroke-width="2.2" stroke-linejoin="round" stroke-linecap="round"/>
<path d="M460.0 905.8 L458.1 913.1" fill="none" stroke="#ffffff" stroke-width="2.0" stroke-linejoin="round" stroke-linecap="round"/>
<path d="M456.1 923.8 L452.2 939.4" fill="none" stroke="#ffffff" stroke-width="2.0" stroke-linejoin="round" stroke-linecap="round"/>
<path d="M485.4 921.8 L481.5 933.5 L494.2 938.4" fill="none" stroke="#ffffff" stroke-width="2.0" stroke-linejoin="round" stroke-linecap="round"/>
<path d="M267.0 931.2 L291.4 939.4 L294.3 945.2" fill="none" stroke="#ffffff" stroke-width="2.2" stroke-linejoin="round" stroke-linecap="round"/>
<path d="M320.6 909.2 L346.0 916.0" fill="none" stroke="#ffffff" stroke-width="2.0" stroke-linejoin="round" stroke-linecap="round"/>
<path d="M441.5 938.4 L439.6 945.2" fill="none" stroke="#ffffff" stroke-width="2.0" stroke-linejoin="round" stroke-linecap="round"/>
<path d="M543.3 775.2 L529.9 823.3 L516.6 879.4 L501.9 944.9" fill="none" stroke="#ffffff" stroke-width="3.2" stroke-linejoin="round" stroke-linecap="round"/>
<path d="M486.6 776.5 L537.9 789.9" fill="none" stroke="#ffffff" stroke-width="2.4" stroke-linejoin="round" stroke-linecap="round"/>
<path d="M546.0 772.5 L562.0 776.5 L567.3 785.3" fill="none" stroke="#ffffff" stroke-width="2.4" stroke-linejoin="round" stroke-linecap="round"/>
<path d="M600.8 713.7 L592.7 724.4 L591.4 748.5 L574.0 812.6" fill="none" stroke="#ffffff" stroke-width="2.2" stroke-linejoin="round" stroke-linecap="round"/>
<path d="M554.0 811.3 L587.4 819.3 L587.4 855.4 L578.0 867.4 L574.8 944.9" fill="none" stroke="#ffffff" stroke-width="2.2" stroke-linejoin="round" stroke-linecap="round"/>
<path d="M591.4 748.5 L620.0 755.1" fill="none" stroke="#ffffff" stroke-width="2.2" stroke-linejoin="round" stroke-linecap="round"/>
<path d="M437.7 700.3 L435.1 709.7" fill="none" stroke="#ffffff" stroke-width="2.2" stroke-linejoin="round" stroke-linecap="round"/>
<path d="M559.3 700.3 L555.3 711.0" fill="none" stroke="#ffffff" stroke-width="2.2" stroke-linejoin="round" stroke-linecap="round"/>
<path d="M523.2 892.8 L524.6 906.1 L537.9 908.8 L539.3 919.5" fill="none" stroke="#ffffff" stroke-width="2.0" stroke-linejoin="round" stroke-linecap="round"/>
<path d="M515.2 930.2 L554.0 935.5 L575.4 944.9" fill="none" stroke="#ffffff" stroke-width="2.0" stroke-linejoin="round" stroke-linecap="round"/>
<path d="M787.1 735.1 L776.4 775.2 L765.7 820.6 L749.7 882.1 L733.6 944.9" fill="none" stroke="#ffffff" stroke-width="5.5" stroke-linejoin="round" stroke-linecap="round"/>
<path d="M799.1 717.7 L807.1 732.4 L805.8 753.8 L797.8 777.9 L781.7 788.5" fill="none" stroke="#ffffff" stroke-width="4.4" stroke-linejoin="round" stroke-linecap="round"/>
<path d="M787.1 721.7 L792.4 711.0 L803.1 717.7" fill="none" stroke="#ffffff" stroke-width="2.4" stroke-linejoin="round" stroke-linecap="round"/>
<path d="M757.7 852.7 L867.3 882.1 L960.0 908.8" fill="none" stroke="#ffffff" stroke-width="2.6" stroke-linejoin="round" stroke-linecap="round"/>
<path d="M956.8 787.2 L954.9 866.0 L952.8 944.9" fill="none" stroke="#ffffff" stroke-width="3.0" stroke-linejoin="round" stroke-linecap="round"/>
<path d="M728.3 876.7 L717.6 903.5 L883.3 944.9" fill="none" stroke="#ffffff" stroke-width="2.4" stroke-linejoin="round" stroke-linecap="round"/>
<path d="M725.6 879.4 L749.7 882.1" fill="none" stroke="#ffffff" stroke-width="2.2" stroke-linejoin="round" stroke-linecap="round"/>
<path d="M701.6 903.5 L717.6 906.1" fill="none" stroke="#ffffff" stroke-width="2.2" stroke-linejoin="round" stroke-linecap="round"/>
<path d="M698.9 906.1 L696.2 944.9" fill="none" stroke="#ffffff" stroke-width="2.2" stroke-linejoin="round" stroke-linecap="round"/>
<path d="M760.4 895.4 L813.8 900.8 L811.1 922.2 L803.1 944.9" fill="none" stroke="#ffffff" stroke-width="2.2" stroke-linejoin="round" stroke-linecap="round"/>
<path d="M760.4 895.4 L757.7 922.2 L763.0 944.9" fill="none" stroke="#ffffff" stroke-width="2.0" stroke-linejoin="round" stroke-linecap="round"/>
<path d="M773.7 879.4 L787.1 882.1 L784.4 892.8" fill="none" stroke="#ffffff" stroke-width="2.0" stroke-linejoin="round" stroke-linecap="round"/>
<path d="M832.5 772.5 L840.5 775.2 L835.2 793.9 L867.3 801.9 L864.6 820.6 L915.4 834.0" fill="none" stroke="#ffffff" stroke-width="2.2" stroke-linejoin="round" stroke-linecap="round"/>
<path d="M821.8 761.8 L829.8 775.2 L813.8 785.9 L803.1 788.5" fill="none" stroke="#ffffff" stroke-width="2.0" stroke-linejoin="round" stroke-linecap="round"/>
<path d="M867.3 801.9 L880.6 777.9 L883.3 775.2" fill="none" stroke="#ffffff" stroke-width="2.0" stroke-linejoin="round" stroke-linecap="round"/>
<path d="M856.6 844.7 L867.3 801.9" fill="none" stroke="#ffffff" stroke-width="2.0" stroke-linejoin="round" stroke-linecap="round"/>
<path d="M888.6 823.3 L894.0 850.0 L883.3 892.8 L877.9 944.9" fill="none" stroke="#ffffff" stroke-width="2.2" stroke-linejoin="round" stroke-linecap="round"/>
<path d="M910.0 820.6 L934.1 823.3 L931.4 844.7 L955.5 850.0" fill="none" stroke="#ffffff" stroke-width="2.0" stroke-linejoin="round" stroke-linecap="round"/>
<path d="M840.5 724.4 L835.2 748.5 L832.5 772.5" fill="none" stroke="#ffffff" stroke-width="2.0" stroke-linejoin="round" stroke-linecap="round"/>
<path d="M840.5 724.4 L918.0 737.8 L915.4 764.5" fill="none" stroke="#ffffff" stroke-width="2.0" stroke-linejoin="round" stroke-linecap="round"/>
<path d="M728.3 700.3 L733.6 713.7 L763.0 721.7 L787.1 721.7" fill="none" stroke="#ffffff" stroke-width="2.0" stroke-linejoin="round" stroke-linecap="round"/>
<path d="M813.8 711.0 L840.5 724.4" fill="none" stroke="#ffffff" stroke-width="2.0" stroke-linejoin="round" stroke-linecap="round"/>
<path d="M918.0 700.3 L920.7 737.8" fill="none" stroke="#ffffff" stroke-width="2.0" stroke-linejoin="round" stroke-linecap="round"/>
<path d="M843.2 911.5 L840.5 922.2 L835.2 935.5" fill="none" stroke="#ffffff" stroke-width="2.0" stroke-linejoin="round" stroke-linecap="round"/>
<path d="M784.4 823.3 L797.8 826.0 L805.8 832.6" fill="none" stroke="#ffffff" stroke-width="2.0" stroke-linejoin="round" stroke-linecap="round"/>
<path d="M783.1 839.3 L781.7 855.4" fill="none" stroke="#ffffff" stroke-width="2.0" stroke-linejoin="round" stroke-linecap="round"/>
<path d="M600.0 747.1 L637.4 757.8" fill="none" stroke="#e6e8eb" stroke-width="2.0" stroke-linejoin="round" stroke-linecap="round"/>
<path d="M600.0 876.7 L616.0 882.1" fill="none" stroke="#ffffff" stroke-width="2.0" stroke-linejoin="round" stroke-linecap="round"/>
<path d="M961.4 859.4 L1089.7 894.1 L1105.7 895.4 L1127.1 892.8" fill="none" stroke="#ffffff" stroke-width="2.6" stroke-linejoin="round" stroke-linecap="round"/>
<path d="M973.4 700.3 L968.1 761.8 L966.7 801.9 L961.4 859.4 L956.0 944.9" fill="none" stroke="#ffffff" stroke-width="2.4" stroke-linejoin="round" stroke-linecap="round"/>
<path d="M966.7 800.6 L1085.7 831.3 L1089.1 842.0" fill="none" stroke="#ffffff" stroke-width="2.4" stroke-linejoin="round" stroke-linecap="round"/>
<path d="M968.1 843.3 L1024.2 850.0" fill="none" stroke="#ffffff" stroke-width="2.2" stroke-linejoin="round" stroke-linecap="round"/>
<path d="M1131.1 700.3 L1131.1 784.5 L1127.1 828.6" fill="none" stroke="#ffffff" stroke-width="2.6" stroke-linejoin="round" stroke-linecap="round"/>
<path d="M1053.6 761.8 L1127.1 781.9" fill="none" stroke="#ffffff" stroke-width="2.2" stroke-linejoin="round" stroke-linecap="round"/>
<path d="M1065.6 789.9 L1093.7 796.6 L1097.7 783.2" fill="none" stroke="#ffffff" stroke-width="2.2" stroke-linejoin="round" stroke-linecap="round"/>
<path d="M1113.7 835.3 L1124.4 840.7" fill="none" stroke="#ffffff" stroke-width="3.0" stroke-linejoin="round" stroke-linecap="round"/>
<path d="M969.4 863.4 L988.1 868.7 L984.1 879.4 L966.7 874.1" fill="none" stroke="#ffffff" stroke-width="2.0" stroke-linejoin="round" stroke-linecap="round"/>
<path d="M998.8 871.4 L1013.5 886.1 L1032.2 883.4 L1041.6 879.4" fill="none" stroke="#ffffff" stroke-width="2.0" stroke-linejoin="round" stroke-linecap="round"/>
<path d="M1016.2 876.7 L1013.5 886.1" fill="none" stroke="#ffffff" stroke-width="2.0" stroke-linejoin="round" stroke-linecap="round"/>
<path d="M1046.9 887.4 L1042.9 944.9" fill="none" stroke="#ffffff" stroke-width="2.2" stroke-linejoin="round" stroke-linecap="round"/>
<path d="M1093.7 898.1 L1084.3 944.9" fill="none" stroke="#ffffff" stroke-width="2.2" stroke-linejoin="round" stroke-linecap="round"/>
<polygon points="1259.3,716.1 1271.0,719.5 1280.2,731.2 1271.0,746.3 1264.3,746.3 1254.2,729.6" fill="#aecbfa" stroke="#fff" stroke-width="2.2" stroke-linejoin="round"/>
<polygon points="1271.0,702.7 1297.9,705.2 1297.9,724.5 1281.1,719.5 1271.0,709.4" fill="#aecbfa" stroke="#fff" stroke-width="2.2" stroke-linejoin="round"/>
<polygon points="1260.1,725.4 1263.5,724.5 1264.3,732.1 1260.9,732.9" fill="#c6e5cc"/>
<polygon points="1281.1,710.3 1289.5,711.9 1290.3,717.0 1283.6,715.3" fill="#c6e5cc"/>
<path d="M1247.5 724.5 L1271.0 699.4" fill="none" stroke="#ffffff" stroke-width="2.2" stroke-linejoin="round" stroke-linecap="round"/>
<path d="M1247.5 724.5 L1266.0 751.4 L1289.5 748.0 L1299.5 736.3" fill="none" stroke="#ffffff" stroke-width="2.2" stroke-linejoin="round" stroke-linecap="round"/>
<path d="M1287.8 726.2 L1299.5 729.6" fill="none" stroke="#ffffff" stroke-width="2.0" stroke-linejoin="round" stroke-linecap="round"/>
<path d="M1187.1 739.6 L1175.4 714.5 L1168.7 711.4" fill="none" stroke="#ffffff" stroke-width="2.2" stroke-linejoin="round" stroke-linecap="round"/>
<path d="M1187.1 750.5 L1177.0 790.0 L1175.4 800.0 L1167.8 841.1" fill="none" stroke="#ffffff" stroke-width="2.2" stroke-linejoin="round" stroke-linecap="round"/>
<path d="M1194.7 749.7 L1214.8 775.7" fill="none" stroke="#ffffff" stroke-width="2.2" stroke-linejoin="round" stroke-linecap="round"/>
<path d="M1180.4 726.2 L1200.5 726.2 L1212.3 734.9 L1217.3 763.1 L1211.4 769.8" fill="none" stroke="#ffffff" stroke-width="2.2" stroke-linejoin="round" stroke-linecap="round"/>
<path d="M1210.6 700.2 L1212.3 734.9" fill="none" stroke="#ffffff" stroke-width="2.2" stroke-linejoin="round" stroke-linecap="round"/>
<path d="M1164.5 795.8 L1177.9 800.9" fill="none" stroke="#ffffff" stroke-width="2.2" stroke-linejoin="round" stroke-linecap="round"/>
<circle cx="1190.5" cy="744.7" r="5.6" fill="#c6e5cc" stroke="#fff" stroke-width="2.2"/>
<circle cx="1174.5" cy="701.0" r="13" fill="none" stroke="#fff" stroke-width="2.2"/>
<path d="M1129.2 699.4 L1132.6 759.8 L1130.1 783.2 L1123.4 813.4" fill="none" stroke="#ffffff" stroke-width="2.6" stroke-linejoin="round" stroke-linecap="round"/>
<path d="M1120.0 779.9 L1130.1 782.4" fill="none" stroke="#ffffff" stroke-width="2.2" stroke-linejoin="round" stroke-linecap="round"/>
<path d="M1227.4 737.9 L1231.6 779.9 L1220.7 842.0 L1217.3 857.1" fill="none" stroke="#ffffff" stroke-width="2.4" stroke-linejoin="round" stroke-linecap="round"/>
<path d="M1299.5 751.4 L1287.8 749.7 L1247.5 788.3 L1237.4 781.6 L1231.6 838.6 L1244.2 842.0 L1250.0 820.2 L1247.5 788.3" fill="none" stroke="#ffffff" stroke-width="2.2" stroke-linejoin="round" stroke-linecap="round"/>
<path d="M1289.5 762.3 L1284.4 763.1 L1292.8 769.8 L1299.5 764.8" fill="none" stroke="#ffffff" stroke-width="2.0" stroke-linejoin="round" stroke-linecap="round"/>
<path d="M1247.5 788.3 L1252.6 790.0 L1274.4 808.4 L1299.5 790.0" fill="none" stroke="#ffffff" stroke-width="2.2" stroke-linejoin="round" stroke-linecap="round"/>
<path d="M1274.4 808.4 L1287.8 820.2 L1299.5 816.8" fill="none" stroke="#ffffff" stroke-width="2.0" stroke-linejoin="round" stroke-linecap="round"/>
<path d="M1247.5 801.7 L1267.7 816.8 L1266.0 830.2 L1262.6 840.3" fill="none" stroke="#ffffff" stroke-width="2.2" stroke-linejoin="round" stroke-linecap="round"/>
<path d="M1266.0 830.2 L1287.8 835.3" fill="none" stroke="#ffffff" stroke-width="2.0" stroke-linejoin="round" stroke-linecap="round"/>
<path d="M1080.7 898.7 L1090.0 896.4 L1141.1 888.7 L1224.7 880.1 L1244.9 869.3" fill="none" stroke="#ffffff" stroke-width="2.2" stroke-linejoin="round" stroke-linecap="round"/>
<path d="M1140.3 847.6 L1142.7 887.9 L1136.5 904.9 L1134.9 912.7" fill="none" stroke="#ffffff" stroke-width="2.2" stroke-linejoin="round" stroke-linecap="round"/>
<path d="M1151.9 850.7 L1182.9 903.4 L1190.7 915.8" fill="none" stroke="#ffffff" stroke-width="2.2" stroke-linejoin="round" stroke-linecap="round"/>
<path d="M1176.7 881.7 L1226.3 903.4 L1246.4 906.5" fill="none" stroke="#ffffff" stroke-width="2.2" stroke-linejoin="round" stroke-linecap="round"/>
<path d="M1182.9 903.4 L1224.7 881.7" fill="none" stroke="#ffffff" stroke-width="2.2" stroke-linejoin="round" stroke-linecap="round"/>
<path d="M1198.4 894.1 L1176.7 906.5" fill="none" stroke="#ffffff" stroke-width="2.2" stroke-linejoin="round" stroke-linecap="round"/>
<path d="M1105.5 894.4 L1090.0 900.6 L1083.8 911.1" fill="none" stroke="#ffffff" stroke-width="2.2" stroke-linejoin="round" stroke-linecap="round"/>
<path d="M1244.9 869.3 L1238.7 898.7 L1246.4 906.5 L1246.4 925.0" fill="none" stroke="#ffffff" stroke-width="2.4" stroke-linejoin="round" stroke-linecap="round"/>
<path d="M1260.4 926.6 L1265.0 932.8 L1275.8 928.1" fill="none" stroke="#ffffff" stroke-width="2.0" stroke-linejoin="round" stroke-linecap="round"/>
<path d="M694.9 700.3 L705.6 729.7 L728.3 727.1 L736.3 719.1 L739.0 711.0 L767.0 724.4" fill="none" stroke="#6fbf8b" stroke-width="0.8" stroke-dasharray="3 2"/>
<rect x="767.0" y="719.1" width="17" height="16" rx="3" fill="#f1f8f3" stroke="#6fbf8b" stroke-width="0.8" stroke-dasharray="2.5 1.5"/>
<path d="M1012.2 705.7 L1004.1 724.4 L977.4 729.7 L974.7 748.5" fill="none" stroke="#8fcf9f" stroke-width="0.8" stroke-dasharray="3 2"/>
<path d="M947.4 700.3 L952.8 735.1 L955.5 775.2" fill="none" stroke="#8fcf9f" stroke-width="0.8" stroke-dasharray="3 2"/>
<path d="M560 690.4 L1310 881.7" fill="none" stroke="#f4b93c" stroke-width="11.4"/>
<path d="M560 690.4 L1310 881.7" fill="none" stroke="#fdd96c" stroke-width="9.2"/>
<path d="M560 690.4 L1310 881.7" fill="none" stroke="#f1b338" stroke-width="1"/>
<text x="296.6" y="710.6" font-size="14.3" fill="#70757a" textLength="127.0" lengthAdjust="spacingAndGlyphs" stroke="#fff" stroke-width="2.6" stroke-linejoin="round" paint-order="stroke">районний суд міста</text>
<text x="626.0" y="709.0" font-size="13.6" fill="#6b4a12" font-weight="700" transform="rotate(14.0 626.0 709.0)" textLength="122.0" lengthAdjust="spacingAndGlyphs" stroke="#fde293" stroke-width="2.2" stroke-linejoin="round" paint-order="stroke">проспект Перемоги</text>
<text x="961.5" y="796.0" font-size="13.6" fill="#6b4a12" font-weight="700" transform="rotate(14.4 961.5 796.0)" textLength="122.0" lengthAdjust="spacingAndGlyphs" stroke="#fde293" stroke-width="2.2" stroke-linejoin="round" paint-order="stroke">проспект Перемоги</text>
<text x="764.4" y="711.6" font-size="14" fill="#5f6b7a" textLength="122.0" lengthAdjust="spacingAndGlyphs" stroke="#fff" stroke-width="2.6" stroke-linejoin="round" paint-order="stroke">художніх фільмів…</text>
<path d="M900.7 715.0 C899.8 710.9 895.2 707.8 895.1 704.9 A5.8 5.8 0 1 1 906.3 704.9 C906.2 707.8 901.6 710.9 900.7 715.0 Z" fill="#78909c" stroke="#fff" stroke-width="1"/>
<text x="773.7" y="763.2" font-size="14" fill="#3e7bd4" textLength="66.8" lengthAdjust="spacingAndGlyphs" stroke="#fff" stroke-width="2.6" stroke-linejoin="round" paint-order="stroke">Шулявська</text>
<polygon points="843.2,763.3 845.9,753.6 847.2,753.6 849.2,758.0 851.2,753.6 852.5,753.6 855.2,763.3 851.7,763.3 851.1,759.6 849.2,762.8 847.3,759.6 846.7,763.3" fill="#0f9d3a" stroke="#fff" stroke-width="0.7" paint-order="stroke"/>
<polygon points="1208.4,876.3 1211.1,866.6 1212.4,866.6 1214.4,871.0 1216.4,866.6 1217.7,866.6 1220.4,876.3 1216.9,876.3 1216.3,872.6 1214.4,875.8 1212.5,872.6 1211.9,876.3" fill="#0f9d3a" stroke="#fff" stroke-width="0.7" paint-order="stroke"/>
<polygon points="770.0,733.4 771.7,727.4 772.5,727.4 773.7,730.1 775.0,727.4 775.8,727.4 777.4,733.4 775.3,733.4 774.9,731.1 773.7,733.1 772.5,731.1 772.2,733.4" fill="#0f9d3a" stroke="#fff" stroke-width="0.7" paint-order="stroke"/>
<path d="M783.1 825.6 C781.3 817.1 771.5 810.4 771.3 804.2 A12.2 12.2 0 1 1 794.9 804.2 C794.7 810.4 784.9 817.1 783.1 825.6 Z" fill="#ea4335" stroke="#c5301f" stroke-width="0.8"/><circle cx="783.1" cy="801.2" r="4.4" fill="#b31412"/>
<text x="798.3" y="805.1" font-size="14.2" fill="#c5221f" textLength="100.2" lengthAdjust="spacingAndGlyphs" stroke="#fff" stroke-width="3.0" stroke-linejoin="round" paint-order="stroke">вулиця Вадима</text>
<text x="798.3" y="819.3" font-size="14.2" fill="#c5221f" textLength="127.2" lengthAdjust="spacingAndGlyphs" stroke="#fff" stroke-width="3.0" stroke-linejoin="round" paint-order="stroke">Гетьмана, 1Б, Київ…</text>
<text x="265.2" y="847.9" font-size="14.5" fill="#3e7bd4" textLength="52.0" lengthAdjust="spacingAndGlyphs" stroke="#fff" stroke-width="2.6" stroke-linejoin="round" paint-order="stroke">s Master</text>
<text x="579.4" y="872.7" font-size="14.2" fill="#3e7bd4" textLength="96.2" lengthAdjust="spacingAndGlyphs" stroke="#fff" stroke-width="2.6" stroke-linejoin="round" paint-order="stroke">ULTRAMARKET</text>
<path d="M689.0 882.8 C687.5 875.9 679.7 870.6 679.5 865.7 A9.8 9.8 0 1 1 698.5 865.7 C698.3 870.6 690.5 875.9 689.0 882.8 Z" fill="#4a8df6" stroke="#fff" stroke-width="1"/><g transform="translate(689 863.2)"><path d="M-5 -4.2 h1.9 l1.5 5.4 h5.2 l1.2 -3.8 h-7.2" fill="none" stroke="#fff" stroke-width="1.2" stroke-linejoin="round"/><circle cx="-1.2" cy="3.3" r="0.95" fill="#fff"/><circle cx="3" cy="3.3" r="0.95" fill="#fff"/></g>
<text x="562.0" y="912.8" font-size="14.4" fill="#2b6fd6" textLength="104.8" lengthAdjust="spacingAndGlyphs" stroke="#fff" stroke-width="2.6" stroke-linejoin="round" paint-order="stroke" style="-webkit-text-stroke:0.5px #2b6fd6">Cosmo Multimall</text>
<path d="M680.2 924.2 C678.7 917.3 670.9 912.0 670.7 907.1 A9.8 9.8 0 1 1 689.7 907.1 C689.5 912.0 681.7 917.3 680.2 924.2 Z" fill="#4a8df6" stroke="#fff" stroke-width="1"/><g transform="translate(680.2 904.6)"><path d="M-4 -1.6 h8 l0.5 6 h-9 z" fill="#fff"/><path d="M-1.9 -1.4 v-1.2 a1.9 1.9 0 0 1 3.8 0 v1.2" fill="none" stroke="#fff" stroke-width="1.1"/><circle cx="0" cy="1.3" r="0.9" fill="#4a8df6"/></g>
<path d="M543.3 782.1 C541.8 775.2 534.0 769.9 533.8 765.0 A9.8 9.8 0 1 1 552.8 765.0 C552.6 769.9 544.8 775.2 543.3 782.1 Z" fill="#4a8df6" stroke="#fff" stroke-width="1"/><g transform="translate(543.3 762.5)"><path d="M-4 -1.6 h8 l0.5 6 h-9 z" fill="#fff"/><path d="M-1.9 -1.4 v-1.2 a1.9 1.9 0 0 1 3.8 0 v1.2" fill="none" stroke="#fff" stroke-width="1.1"/><circle cx="0" cy="1.3" r="0.9" fill="#4a8df6"/></g>
<text x="766.5" y="863.5" font-size="11.8" fill="#6e6e6e" transform="rotate(14.6 766.5 863.5)" textLength="93.0" lengthAdjust="spacingAndGlyphs" stroke="#fff" stroke-width="2.6" stroke-linejoin="round" paint-order="stroke">вулиця Смоленська</text>
<text x="752.5" y="918.5" font-size="11.8" fill="#6e6e6e" transform="rotate(15.2 752.5 918.5)" textLength="85.0" lengthAdjust="spacingAndGlyphs" stroke="#fff" stroke-width="2.6" stroke-linejoin="round" paint-order="stroke">вулиця Металістів</text>
<text x="516.8" y="917.8" font-size="11.8" fill="#6e6e6e" transform="rotate(14.8 516.8 917.8)" textLength="104.0" lengthAdjust="spacingAndGlyphs" stroke="#fff" stroke-width="2.6" stroke-linejoin="round" paint-order="stroke">вулиця Олекси Тихого</text>
<text x="947.3" y="803.4" font-size="11.8" fill="#6e6e6e" transform="rotate(90.0 947.3 803.4)" textLength="120.0" lengthAdjust="spacingAndGlyphs" stroke="#fff" stroke-width="2.6" stroke-linejoin="round" paint-order="stroke">вулиця Академіка Янгеля</text>
<text x="506.2" y="946.0" font-size="11.8" fill="#6e6e6e" transform="rotate(-90.0 506.2 946.0)" textLength="12.0" lengthAdjust="spacingAndGlyphs" stroke="#fff" stroke-width="2.6" stroke-linejoin="round" paint-order="stroke">на</text>
<text x="958.7" y="705.7" font-size="14.3" fill="#3f8f5c" textLength="53.5" lengthAdjust="spacingAndGlyphs" stroke="#e4f3e7" stroke-width="2.6" stroke-linejoin="round" paint-order="stroke">Пушкіна</text>
<text x="1072.3" y="709.7" font-size="14.2" fill="#66717d" text-anchor="middle" textLength="91.0" lengthAdjust="spacingAndGlyphs" stroke="#fff" stroke-width="2.6" stroke-linejoin="round" paint-order="stroke">Національний</text>
<text x="1072.3" y="723.9" font-size="14.2" fill="#66717d" text-anchor="middle" textLength="65.0" lengthAdjust="spacingAndGlyphs" stroke="#fff" stroke-width="2.6" stroke-linejoin="round" paint-order="stroke">медичний</text>
<text x="1072.3" y="738.3" font-size="14.2" fill="#66717d" text-anchor="middle" textLength="76.7" lengthAdjust="spacingAndGlyphs" stroke="#fff" stroke-width="2.6" stroke-linejoin="round" paint-order="stroke">університет</text>
<text x="1072.3" y="751.9" font-size="14.2" fill="#66717d" text-anchor="middle" textLength="66.8" lengthAdjust="spacingAndGlyphs" stroke="#fff" stroke-width="2.6" stroke-linejoin="round" paint-order="stroke">імені О.О…</text>
<path d="M1072.3 786.0 C1070.8 779.1 1063.0 773.8 1062.8 768.9 A9.8 9.8 0 1 1 1081.8 768.9 C1081.6 773.8 1073.8 779.1 1072.3 786.0 Z" fill="#7b8f9c" stroke="#fff" stroke-width="1"/><g transform="translate(1072.3 766.4)"><path d="M-5.4 -1.3 L0 -3.9 L5.4 -1.3 L0 1.3 Z" fill="#fff"/><path d="M-3 0.6 V3 Q0 4.8 3 3 V0.6 L0 2.2 Z" fill="#fff"/><path d="M4.9 -1.1 V2.6" stroke="#fff" stroke-width="0.8"/></g>
<path d="M1111.0 798.6 C1109.5 791.7 1101.7 786.4 1101.5 781.5 A9.8 9.8 0 1 1 1120.5 781.5 C1120.3 786.4 1112.5 791.7 1111.0 798.6 Z" fill="#7b8f9c" stroke="#fff" stroke-width="1"/><g transform="translate(1111 779)"><path d="M-5.4 -1.3 L0 -3.9 L5.4 -1.3 L0 1.3 Z" fill="#fff"/><path d="M-3 0.6 V3 Q0 4.8 3 3 V0.6 L0 2.2 Z" fill="#fff"/><path d="M4.9 -1.1 V2.6" stroke="#fff" stroke-width="0.8"/></g>
<text x="1088.3" y="812.6" font-size="14.2" fill="#66717d" textLength="137.6" lengthAdjust="spacingAndGlyphs" stroke="#fff" stroke-width="2.6" stroke-linejoin="round" paint-order="stroke">Санітарно-гігієнічний</text>
<text x="1088.3" y="826.8" font-size="14.2" fill="#66717d" textLength="137.2" lengthAdjust="spacingAndGlyphs" stroke="#fff" stroke-width="2.6" stroke-linejoin="round" paint-order="stroke">корпус НМУ імені О…</text>
<text x="1066.1" y="876.2" font-size="14.2" fill="#3e7bd4" textLength="139.8" lengthAdjust="spacingAndGlyphs" stroke="#fff" stroke-width="2.6" stroke-linejoin="round" paint-order="stroke">Політехнічний інститут</text>
<path d="M1123.0 930.4 C1121.5 923.5 1113.7 918.1 1113.5 913.2 A9.8 9.8 0 1 1 1132.5 913.2 C1132.3 918.1 1124.5 923.5 1123.0 930.4 Z" fill="#12b5cb" stroke="#fff" stroke-width="1"/><g transform="translate(1123 910.8)"><path d="M-3.6 -4.6 h1.7 v1.4 h1.1 v-1.4 h1.6 v1.4 h1.1 v-1.4 h1.7 v3 l-1.1 1 v3.4 l1.2 1 v1.4 h-7.4 v-1.4 l1.2 -1 v-3.4 l-1.1 -1 z" fill="#fff"/></g>
<text x="1136.4" y="914.2" font-size="14.4" fill="#1a8a94" textLength="108.3" lengthAdjust="spacingAndGlyphs" stroke="#fff" stroke-width="2.6" stroke-linejoin="round" paint-order="stroke" fill-opacity="1">Старі будівлі КПІ</text>
<text x="1136.4" y="928.0" font-size="14.4" fill="#1a8a94" textLength="108.3" lengthAdjust="spacingAndGlyphs" stroke="#fff" stroke-width="2.6" stroke-linejoin="round" paint-order="stroke">Ігоря Сікорського</text>
<text x="1132.4" y="701.2" font-size="14.3" fill="#2f8f4e" textLength="125.6" lengthAdjust="spacingAndGlyphs" stroke="#e4f3e7" stroke-width="2.6" stroke-linejoin="round" paint-order="stroke">Київський зоопарк</text>
<path d="M1235.3 735.8 C1233.8 728.9 1226.0 723.6 1225.8 718.7 A9.8 9.8 0 1 1 1244.8 718.7 C1244.6 723.6 1236.8 728.9 1235.3 735.8 Z" fill="#34a853" stroke="#fff" stroke-width="1"/><g transform="translate(1235.3 716.2) scale(1.2)"><ellipse cx="0" cy="1.8" rx="3" ry="2.3" fill="#fff"/><circle cx="-3.5" cy="-1.1" r="1.25" fill="#fff"/><circle cx="-1.25" cy="-3" r="1.25" fill="#fff"/><circle cx="1.25" cy="-3" r="1.25" fill="#fff"/><circle cx="3.5" cy="-1.1" r="1.25" fill="#fff"/></g>
<text x="1001.3" y="938.4" font-size="22.5" fill="#5d7b96" font-weight="700" textLength="86.5" lengthAdjust="spacingAndGlyphs" stroke="#eef0f2" stroke-width="2.6" stroke-linejoin="round" paint-order="stroke">Київський</text>
<text x="1287.4" y="839.3" font-size="14.5" fill="#3e7bd4" stroke="#fff" stroke-width="2.6" stroke-linejoin="round" paint-order="stroke">S</text>
<text x="1291.6" y="904.8" font-size="14.5" fill="#3e7bd4" stroke="#fff" stroke-width="2.6" stroke-linejoin="round" paint-order="stroke">І</text>
<text x="760.4" y="923.6" font-size="17.2" font-family="Liberation Sans, sans-serif" stroke="#fff" stroke-width="2.2" paint-order="stroke" stroke-linejoin="round" textLength="45.5" lengthAdjust="spacingAndGlyphs"><tspan fill="#4285f4">G</tspan><tspan fill="#ea4335">o</tspan><tspan fill="#fbbc05">o</tspan><tspan fill="#4285f4">g</tspan><tspan fill="#34a853">l</tspan><tspan fill="#ea4335">e</tspan></text>
<rect x="966.7" y="932.9" width="330" height="13" fill="#fff" fill-opacity="0.72"/>
<text x="970.7" y="941.6" font-size="10.3" fill="#2a2a2a" textLength="84.8" lengthAdjust="spacingAndGlyphs">Комбінації клавіш</text>
<text x="1067.8" y="941.6" font-size="10.3" fill="#2a2a2a" textLength="110.6" lengthAdjust="spacingAndGlyphs">Дані карт ©2023 Google</text>
<text x="1191.2" y="941.6" font-size="10.3" fill="#2a2a2a" textLength="98.1" lengthAdjust="spacingAndGlyphs">Умови використання</text>
<rect x="1246" y="841.5" width="40.1" height="80.1" rx="2" fill="#fff" filter="url(#sh)"/>
<rect x="1251.4" y="881" width="29.4" height="1" fill="#e6e6e6"/>
<path d="M1257.3 861.2 H1274.7 M1266 852.5 V869.9 M1257.3 901.7 H1274.7" stroke="#666" stroke-width="3.2"/>
<rect x="279.2" y="894" width="41.5" height="40.8" rx="3" fill="#fff" filter="url(#sh)"/>
<rect x="281" y="896" width="37.9" height="37" rx="1.5" fill="#50564c"/>
<rect x="289.3" y="899.6" width="1.9" height="1.0" fill="#9a9e96"/><rect x="281.7" y="915.0" width="2.6" height="2.2" fill="#5d6b55"/><rect x="288.8" y="914.5" width="2.5" height="2.3" fill="#5d6b55"/><rect x="290.2" y="928.5" width="2.6" height="2.3" fill="#6d7266"/><rect x="309.0" y="902.7" width="1.4" height="2.4" fill="#5d6b55"/><rect x="314.6" y="925.3" width="1.0" height="1.9" fill="#8b8f86"/><rect x="304.5" y="913.5" width="1.3" height="1.3" fill="#7c8177"/><rect x="314.1" y="924.2" width="0.8" height="1.3" fill="#5d6b55"/><rect x="305.7" y="906.8" width="1.7" height="1.9" fill="#2f352e"/><rect x="296.1" y="901.6" width="1.4" height="2.2" fill="#5d6b55"/><rect x="283.8" y="912.0" width="1.9" height="2.0" fill="#5d6b55"/><rect x="305.5" y="901.0" width="0.9" height="2.4" fill="#2f352e"/><rect x="303.2" y="911.2" width="1.6" height="2.1" fill="#7c8177"/><rect x="292.2" y="915.3" width="1.0" height="0.9" fill="#8b8f86"/><rect x="289.0" y="922.4" width="1.1" height="2.5" fill="#2f352e"/><rect x="291.2" y="896.9" width="2.3" height="2.4" fill="#8b8f86"/><rect x="314.4" y="921.4" width="0.8" height="1.3" fill="#8b8f86"/><rect x="314.8" y="922.7" width="2.7" height="2.4" fill="#9a9e96"/><rect x="304.8" y="898.7" width="2.8" height="1.3" fill="#2f352e"/><rect x="289.8" y="916.7" width="1.5" height="0.8" fill="#7c8177"/><rect x="282.6" y="901.9" width="3.0" height="1.8" fill="#8b8f86"/><rect x="296.4" y="903.1" width="1.0" height="0.9" fill="#2f352e"/><rect x="306.8" y="916.5" width="2.1" height="1.8" fill="#7c8177"/><rect x="301.4" y="907.1" width="1.1" height="1.8" fill="#6d7266"/><rect x="308.1" y="910.1" width="1.9" height="1.2" fill="#2f352e"/><rect x="295.4" y="897.3" width="1.8" height="2.0" fill="#9a9e96"/><rect x="296.0" y="903.4" width="0.9" height="1.3" fill="#2f352e"/><rect x="289.5" y="903.2" width="1.7" height="1.3" fill="#2f352e"/><rect x="292.4" y="926.7" width="2.0" height="2.6" fill="#8b8f86"/><rect x="295.1" y="927.1" width="1.9" height="1.0" fill="#6d7266"/><rect x="288.4" y="926.1" width="1.5" height="2.0" fill="#7c8177"/><rect x="309.0" y="918.2" width="2.0" height="2.0" fill="#9a9e96"/><rect x="305.0" y="905.3" width="2.9" height="0.9" fill="#9a9e96"/><rect x="315.0" y="929.2" width="0.9" height="2.4" fill="#2f352e"/><rect x="285.5" y="929.4" width="2.7" height="2.0" fill="#6d7266"/><rect x="297.3" y="912.3" width="2.8" height="1.2" fill="#9a9e96"/><rect x="281.1" y="927.8" width="2.1" height="1.3" fill="#6d7266"/><rect x="294.9" y="922.6" width="2.7" height="1.8" fill="#9a9e96"/><rect x="311.8" y="903.0" width="2.6" height="1.8" fill="#8b8f86"/><rect x="308.5" y="927.6" width="0.9" height="0.9" fill="#444a41"/><rect x="301.8" y="912.9" width="2.1" height="1.0" fill="#5d6b55"/><rect x="293.7" y="922.5" width="1.5" height="1.4" fill="#6d7266"/><rect x="283.6" y="929.1" width="1.6" height="2.2" fill="#444a41"/><rect x="291.9" y="904.1" width="2.7" height="1.5" fill="#444a41"/><rect x="283.7" y="927.6" width="1.9" height="1.6" fill="#8b8f86"/><rect x="311.0" y="922.8" width="2.2" height="2.5" fill="#3a4038"/><rect x="303.3" y="928.1" width="1.7" height="2.2" fill="#444a41"/><rect x="286.9" y="926.2" width="2.4" height="1.4" fill="#7c8177"/><rect x="311.1" y="904.9" width="2.4" height="0.8" fill="#6d7266"/><rect x="291.9" y="914.8" width="2.5" height="1.9" fill="#444a41"/><rect x="299.4" y="914.0" width="2.7" height="1.4" fill="#9a9e96"/><rect x="307.8" y="930.0" width="2.3" height="1.9" fill="#6d7266"/><rect x="292.0" y="927.5" width="2.5" height="1.8" fill="#444a41"/><rect x="313.8" y="913.5" width="2.1" height="1.6" fill="#444a41"/><rect x="285.9" y="922.6" width="3.0" height="1.4" fill="#8b8f86"/><rect x="296.2" y="916.9" width="1.4" height="2.5" fill="#7c8177"/><rect x="287.9" y="923.4" width="1.0" height="2.0" fill="#3a4038"/><rect x="312.6" y="907.4" width="1.5" height="1.3" fill="#8b8f86"/><rect x="281.8" y="896.7" width="2.6" height="2.3" fill="#3a4038"/><rect x="314.4" y="901.5" width="2.3" height="2.6" fill="#444a41"/><rect x="283.7" y="927.9" width="1.2" height="1.7" fill="#3a4038"/><rect x="312.0" y="903.7" width="2.7" height="2.0" fill="#5d6b55"/><rect x="311.8" y="904.2" width="2.3" height="1.4" fill="#444a41"/><rect x="289.1" y="907.3" width="2.8" height="1.5" fill="#444a41"/><rect x="295.0" y="924.2" width="1.8" height="1.9" fill="#5d6b55"/><rect x="289.8" y="927.0" width="2.3" height="1.9" fill="#444a41"/><rect x="293.8" y="928.8" width="1.1" height="0.9" fill="#6d7266"/><rect x="315.1" y="930.1" width="2.1" height="1.4" fill="#8b8f86"/><rect x="284.2" y="904.9" width="2.2" height="1.7" fill="#2f352e"/><rect x="302.1" y="898.3" width="1.0" height="1.0" fill="#2f352e"/><rect x="282.6" y="909.7" width="0.8" height="1.2" fill="#5d6b55"/><rect x="307.3" y="903.1" width="1.0" height="1.3" fill="#8b8f86"/><rect x="311.8" y="918.2" width="2.4" height="2.0" fill="#7c8177"/><rect x="314.3" y="926.3" width="2.0" height="2.0" fill="#3a4038"/><rect x="306.3" y="915.1" width="1.1" height="2.3" fill="#9a9e96"/><rect x="297.9" y="898.3" width="1.2" height="2.4" fill="#7c8177"/><rect x="299.0" y="914.5" width="2.7" height="1.4" fill="#5d6b55"/><rect x="294.5" y="910.6" width="1.4" height="2.0" fill="#6d7266"/><rect x="291.6" y="923.2" width="1.1" height="2.3" fill="#3a4038"/><rect x="309.8" y="904.0" width="1.8" height="2.1" fill="#6d7266"/><rect x="287.5" y="924.5" width="1.5" height="1.1" fill="#9a9e96"/><rect x="299.6" y="902.5" width="2.2" height="2.4" fill="#444a41"/><rect x="291.7" y="918.3" width="2.1" height="0.9" fill="#9a9e96"/><rect x="303.1" y="904.8" width="2.5" height="1.7" fill="#5d6b55"/><rect x="310.2" y="923.9" width="2.8" height="2.4" fill="#3a4038"/><rect x="311.9" y="918.7" width="2.1" height="1.7" fill="#6d7266"/><rect x="315.6" y="908.2" width="1.2" height="0.9" fill="#3a4038"/><rect x="299.2" y="924.5" width="0.9" height="2.0" fill="#2f352e"/><rect x="292.8" y="916.8" width="2.3" height="1.0" fill="#7c8177"/><rect x="315.2" y="924.5" width="1.0" height="1.2" fill="#6d7266"/><rect x="290.6" y="928.9" width="0.8" height="2.1" fill="#6d7266"/><rect x="288.5" y="904.6" width="2.6" height="1.3" fill="#8b8f86"/><rect x="294.6" y="916.9" width="1.2" height="1.7" fill="#6d7266"/><rect x="283.2" y="913.6" width="2.0" height="1.3" fill="#5d6b55"/><rect x="288.3" y="920.3" width="1.2" height="0.8" fill="#8b8f86"/><rect x="312.0" y="928.1" width="1.5" height="2.4" fill="#5d6b55"/><rect x="314.2" y="928.0" width="1.5" height="1.9" fill="#9a9e96"/><rect x="290.0" y="913.6" width="1.7" height="1.9" fill="#6d7266"/><rect x="304.6" y="918.1" width="1.0" height="2.6" fill="#8b8f86"/><rect x="286.8" y="899.2" width="2.9" height="1.3" fill="#2f352e"/><rect x="288.6" y="918.2" width="2.2" height="0.8" fill="#3a4038"/><rect x="301.0" y="903.0" width="1.3" height="2.3" fill="#3a4038"/><rect x="285.0" y="929.5" width="2.7" height="1.8" fill="#5d6b55"/><rect x="286.3" y="921.7" width="2.8" height="2.1" fill="#7c8177"/><rect x="307.5" y="923.6" width="1.4" height="1.9" fill="#2f352e"/><rect x="303.1" y="921.4" width="3.0" height="1.1" fill="#8b8f86"/><rect x="307.4" y="897.7" width="2.9" height="2.0" fill="#6d7266"/><rect x="315.3" y="898.0" width="2.3" height="2.0" fill="#5d6b55"/><rect x="310.5" y="899.6" width="2.6" height="1.5" fill="#2f352e"/><rect x="302.0" y="913.1" width="1.6" height="2.1" fill="#8b8f86"/><rect x="310.3" y="922.2" width="1.2" height="1.4" fill="#6d7266"/><rect x="291.4" y="908.5" width="2.9" height="2.0" fill="#2f352e"/><rect x="294.4" y="914.5" width="2.9" height="1.1" fill="#3a4038"/><rect x="293.2" y="929.9" width="0.8" height="1.0" fill="#2f352e"/><rect x="291.4" y="919.8" width="2.9" height="1.7" fill="#8b8f86"/><rect x="282.4" y="906.6" width="1.2" height="2.6" fill="#9a9e96"/><rect x="302.6" y="908.1" width="1.8" height="1.0" fill="#6d7266"/><rect x="282.0" y="923.0" width="1.3" height="1.4" fill="#9a9e96"/><rect x="301.9" y="897.9" width="1.9" height="2.6" fill="#3a4038"/><rect x="299.4" y="902.2" width="2.1" height="1.9" fill="#2f352e"/><rect x="306.4" y="896.8" width="1.3" height="1.9" fill="#9a9e96"/><rect x="302.8" y="900.6" width="1.3" height="2.1" fill="#5d6b55"/><rect x="299.9" y="908.8" width="2.8" height="2.3" fill="#8b8f86"/><rect x="304.1" y="915.8" width="1.4" height="1.4" fill="#8b8f86"/><rect x="299.8" y="914.8" width="2.1" height="2.3" fill="#8b8f86"/><rect x="298.3" y="924.6" width="2.7" height="1.9" fill="#3a4038"/><rect x="315.6" y="900.9" width="2.1" height="0.9" fill="#7c8177"/><rect x="309.7" y="926.2" width="2.4" height="0.9" fill="#3a4038"/><rect x="310.3" y="901.1" width="1.4" height="0.9" fill="#7c8177"/><rect x="297.6" y="925.9" width="2.2" height="2.2" fill="#2f352e"/><rect x="299.5" y="922.0" width="2.8" height="1.3" fill="#6d7266"/><rect x="295.6" y="896.1" width="1.0" height="1.6" fill="#8b8f86"/><rect x="283.8" y="910.6" width="1.4" height="2.3" fill="#6d7266"/><rect x="314.4" y="924.2" width="2.4" height="2.1" fill="#2f352e"/><rect x="283.8" y="899.2" width="2.9" height="1.7" fill="#6d7266"/><rect x="299.4" y="898.2" width="2.3" height="1.9" fill="#8b8f86"/><rect x="298.9" y="915.0" width="0.9" height="1.6" fill="#6d7266"/><rect x="285.7" y="899.6" width="1.9" height="2.0" fill="#8b8f86"/><rect x="285.7" y="916.2" width="2.1" height="0.8" fill="#3a4038"/><rect x="282.5" y="905.4" width="2.5" height="1.9" fill="#9a9e96"/>
<rect x="279" y="710.5" width="291.5" height="53.5" rx="2" fill="#fff" filter="url(#sh)"/></g></svg>
<span class="t" style="left:290.67px;top:721.20px;font-size:14.3px;color:#111;letter-spacing:-0.047px;-webkit-text-stroke:0.22px #111;">вулиця Вадима Гетьмана, 1Б</span>
<span class="t" style="left:290.81px;top:741.27px;font-size:12.2px;color:#2f7de1;letter-spacing:-0.029px;">Переглянути збільшену карту</span>
<div class="ckbottom"></div>
<div class="redbox"></div>
</div>
</body></html>
